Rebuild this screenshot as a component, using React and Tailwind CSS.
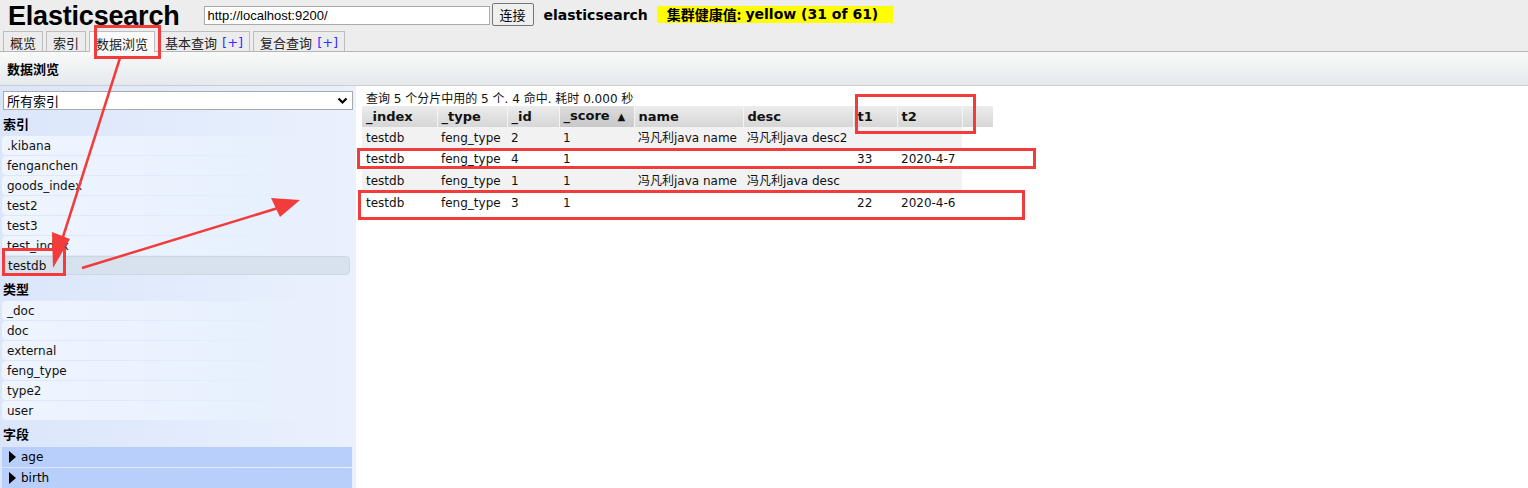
import React from "react";

const FONT = { fontFamily: '"DejaVu Sans", "Noto Sans CJK SC", sans-serif' };
const CJK = { fontFamily: '"Noto Sans CJK SC", sans-serif' };

const TABS = [
  { label: "概览" },
  { label: "索引" },
  { label: "数据浏览", active: true },
  { label: "基本查询", plus: true },
  { label: "复合查询", plus: true },
];

const INDICES = [".kibana", "fenganchen", "goods_index", "test2", "test3", "test_index", "testdb"];
const TYPES = ["_doc", "doc", "external", "feng_type", "type2", "user"];
const FIELDS = ["age", "birth"];

const COLS = [
  { key: "_index", w: 75 },
  { key: "_type", w: 70 },
  { key: "_id", w: 52 },
  { key: "_score", w: 75, sorted: true },
  { key: "name", w: 109 },
  { key: "desc", w: 110 },
  { key: "t1", w: 44 },
  { key: "t2", w: 65 },
];

const ROWS = [
  ["testdb", "feng_type", "2", "1", "冯凡利java name", "冯凡利java desc2", "", ""],
  ["testdb", "feng_type", "4", "1", "", "", "33", "2020-4-7"],
  ["testdb", "feng_type", "1", "1", "冯凡利java name", "冯凡利java desc", "", ""],
  ["testdb", "feng_type", "3", "1", "", "", "22", "2020-4-6"],
];

function SideItem({ label, selected }) {
  return (
    <div
      className={`h-[19px] mb-px ml-[2px] mr-[6px] pl-[5px] flex items-center text-[12px] text-[#111] rounded-l-[4px] ${
        selected
          ? "bg-[#d8e2ee] border border-[#cdd7e3] rounded-[4px]"
          : "bg-gradient-to-r from-[#eef5ff] via-[#eaf2fe] to-transparent"
      }`}
    >
      {label}
    </div>
  );
}

function SideHeader({ children, h }) {
  return (
    <div className={`${h} pl-[3px] flex items-center text-[13px] font-bold text-black`} style={CJK}>
      {children}
    </div>
  );
}

export default function App() {
  return (
    <div className="relative w-[1528px] h-[488px] overflow-hidden bg-white" style={FONT}>
      {/* Top bar */}
      <div className="bg-[#ededed] border-b border-[#b5b5b5]">
        <div className="h-[31px] flex items-start">
          <div
            className="ml-[8px] mt-[1px] text-[27px] leading-[30px] font-bold text-black tracking-[-0.2px]"
            style={{ fontFamily: '"Liberation Sans", sans-serif' }}
          >
            Elasticsearch
          </div>
          <div
            className="ml-[24px] mt-[6px] w-[286px] h-[19px] bg-white border border-[#a9a9a9] flex items-center px-[3px] text-[13px] text-black"
            style={{ fontFamily: '"Liberation Sans", sans-serif' }}
          >
            http://localhost:9200/
          </div>
          <div
            className="ml-[2px] mt-[3px] w-[42px] h-[23px] bg-[#efefef] border border-[#767676] rounded-[2px] flex items-center justify-center text-[13px] text-black"
            style={CJK}
          >
            连接
          </div>
          <div className="ml-[10px] mt-[5px] text-[14px] leading-[20px] font-bold text-black">elasticsearch</div>
          <div className="ml-[9px] mt-[6px] h-[17px] w-[236px] bg-[#ffff00] flex items-center pl-[10px] text-[14px] font-bold text-black">
            <span style={CJK}>集群健康值:</span>
            <span className="ml-[4px]">yellow (31 of 61)</span>
          </div>
        </div>
        <div className="h-[20px] flex items-end pl-[3px] gap-[3px]" style={CJK}>
          {TABS.map((t) => (
            <div
              key={t.label}
              className={`px-[6px] pt-[3px] border border-b-0 border-[#bdbdbd] flex items-center text-[13px] text-[#222] ${
                t.active ? "bg-[#fafafa] -mb-px h-[21px]" : "bg-[#ececec] h-[20px]"
              }`}
            >
              {t.label}
              {t.plus && <span className="ml-[5px] text-[#3030ff]" style={FONT}>[+]</span>}
            </div>
          ))}
        </div>
      </div>

      {/* Sub header */}
      <div
        className="h-[34px] bg-gradient-to-b from-[#f8faf9] to-[#e5e9ed] border-b border-[#cdcdcd] flex items-center pl-[7px] text-[13px] font-bold text-black"
        style={CJK}
      >
        数据浏览
      </div>

      {/* Body */}
      <div className="flex h-[402px]">
        <div className="w-[356px] bg-gradient-to-r from-[#dbe6fb] to-[#eaf1fd] pt-[5px]">
          <div className="mx-[3px] h-[19px] bg-white border border-[#a9a9a9] flex items-center justify-between pl-[3px] pr-[4px]">
            <span className="text-[13px] text-black" style={CJK}>
              所有索引
            </span>
            <svg width="11" height="8" viewBox="0 0 11 8">
              <path d="M1.5 1.5 L5.5 5.5 L9.5 1.5" fill="none" stroke="#000" strokeWidth="2.2" />
            </svg>
          </div>
          <div className="mt-[2px]">
            <SideHeader h="h-[24px]">索引</SideHeader>
            {INDICES.map((i) => (
              <SideItem key={i} label={i} selected={i === "testdb"} />
            ))}
            <SideHeader h="h-[25px]">类型</SideHeader>
            {TYPES.map((i) => (
              <SideItem key={i} label={i} />
            ))}
            <SideHeader h="h-[26px]">字段</SideHeader>
            {FIELDS.map((f) => (
              <div
                key={f}
                className="h-[20px] mb-px ml-[2px] mr-[4px] bg-[#b9cffb] flex items-center pl-[6px] text-[12px] text-black"
              >
                <svg width="9" height="12" viewBox="0 0 9 12" className="mr-[4px]">
                  <path d="M1 0 L8 6 L1 12 Z" fill="#000" />
                </svg>
                {f}
              </div>
            ))}
          </div>
        </div>

        <div className="flex-1 pl-[6px] pt-[4px]">
          <div className="pl-[4px] text-[12px] leading-[16px] text-[#111]">
            <span style={CJK}>查询</span> 5 <span style={CJK}>个分片中用的</span> 5 <span style={CJK}>个</span>. 4{" "}
            <span style={CJK}>命中</span>. <span style={CJK}>耗时</span> 0.000 <span style={CJK}>秒</span>
          </div>
          <table className="border-collapse -mt-px text-[12px] text-[#111]">
            <thead>
              <tr className="h-[21px]">
                {COLS.map((c) => (
                  <th
                    key={c.key}
                    style={{ width: c.w, minWidth: c.w }}
                    className={`p-0 pl-[4px] text-left font-bold text-[13px] leading-[18px] border-r border-[#f4f4f4] ${
                      c.sorted
                        ? "bg-gradient-to-b from-[#dcdcdc] to-[#c8c8c8]"
                        : "bg-gradient-to-b from-[#ececec] to-[#d6d6d6]"
                    }`}
                  >
                    {c.key}
                    {c.sorted && <span className="ml-[8px] text-[10px] align-baseline">▲</span>}
                  </th>
                ))}
                <th style={{ width: 31, minWidth: 31 }} className="p-0 bg-gradient-to-b from-[#ececec] to-[#d6d6d6]" />
              </tr>
            </thead>
            <tbody>
              {ROWS.map((r, ri) => (
                <tr key={ri} className={`${ri === 0 ? "h-[21px]" : "h-[22px]"} ${ri % 2 === 0 ? "bg-[#f2f2f2]" : "bg-white"}`}>
                  {r.map((v, ci) => (
                    <td key={ci} className="p-0 pl-[4px] whitespace-nowrap" style={FONT}>
                      {v}
                    </td>
                  ))}
                  <td className="p-0 bg-white" />
                </tr>
              ))}
            </tbody>
          </table>
        </div>
      </div>

      {/* Red annotations */}
      <div className="absolute left-[94px] top-[25px] w-[67px] h-[34px] border-[3px] border-[#f23c3c]" />
      <div className="absolute left-[2px] top-[248px] w-[64px] h-[28px] border-[3px] border-[#f23c3c]" />
      <div className="absolute left-[855px] top-[94px] w-[121px] h-[40px] border-[3px] border-[#f23c3c]" />
      <div className="absolute left-[357px] top-[148px] w-[679px] h-[21px] border-[3px] border-[#f23c3c]" />
      <div className="absolute left-[358px] top-[190px] w-[667px] h-[30px] border-[3px] border-[#f23c3c]" />
      <svg className="absolute left-0 top-0 pointer-events-none" width="1528" height="488">
        <line x1="120" y1="58" x2="62" y2="240" stroke="#f23c3c" strokeWidth="2.5" />
        <polygon points="53,268 52,232 70,239" fill="#f23c3c" />
        <line x1="82" y1="268" x2="278" y2="208" stroke="#f23c3c" strokeWidth="2.5" />
        <polygon points="300,200 271,198 280,217" fill="#f23c3c" />
      </svg>
    </div>
  );
}
